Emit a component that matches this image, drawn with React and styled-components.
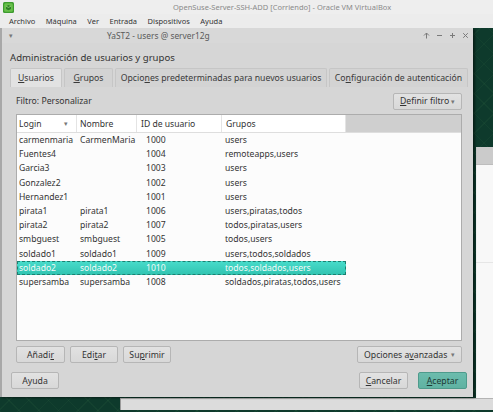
import React from "react";
import styled, { createGlobalStyle, css } from "styled-components";

const Global = createGlobalStyle`
  html, body { margin: 0; padding: 0; }
  body { width: 493px; height: 412px; overflow: hidden; font-family: "Noto Sans", "Open Sans", sans-serif; }
  * { box-sizing: border-box; }
`;

const Frame = styled.div`
  width: 493px;
  height: 412px;
  display: flex;
  flex-direction: column;
  background: #ececec;
  white-space: nowrap;
`;

const TopBar = styled.div`
  height: 14px;
  display: flex;
  align-items: center;
  padding-left: 3px;
  background: #eeeeee;
`;

const TopTitle = styled.span`
  margin-left: 159px;
  font-size: 7.5px;
  color: #8a8a8a;
`;

const MenuBar = styled.div`
  height: 14px;
  display: flex;
  align-items: center;
  padding-left: 4px;
  background: #ececec;
`;

const MenuItem = styled.span`
  font-size: 7.5px;
  color: #333;
  padding: 0 5.5px 0 5px;
`;

const Desktop = styled.div`
  flex: 1;
  position: relative;
  overflow: hidden;
  background-color: #0e3a2c;
  background-image:
    repeating-linear-gradient(45deg, rgba(90, 160, 90, 0.07) 0 1px, transparent 1px 14px),
    repeating-linear-gradient(-45deg, rgba(90, 160, 90, 0.07) 0 1px, transparent 1px 14px);
`;

const BackRight = styled.div`
  position: absolute;
  left: 476px;
  top: 119px;
  width: 40px;
  height: 260px;
  display: flex;
  flex-direction: column;
  background: #f8f8f8;
`;

const BackTitle = styled.div`
  height: 18px;
  background: #cbcbcb;
  border-bottom: 1px solid #bdbdbd;
`;

const BackLine = styled.div`
  margin-top: 97px;
  border-top: 1px solid #e6e6e6;
`;

const BackBottom = styled.div`
  position: absolute;
  left: 120px;
  top: 370px;
  width: 380px;
  height: 12px;
  background: #dcdcdc;
  border-top: 1px solid #b4b4b4;
  border-left: 1px solid #9a9a9a;
`;

const Window = styled.div`
  position: absolute;
  left: 0;
  top: 0;
  width: 473px;
  height: 369px;
  display: flex;
  flex-direction: column;
  background: #d6d6d6;
  border-left: 2px solid #a8a8a8;
  box-shadow: 2px 1px 2px rgba(0, 0, 0, 0.45);
`;

const WinTitle = styled.div`
  height: 15px;
  display: flex;
  align-items: center;
  padding: 0 4px 0 7px;
  background: #d8d8d8;
  color: #5a5a5a;
  font-size: 8.4px;
`;

const WinTitleText = styled.span`
  margin-left: 94px;
  flex: 1;
`;

const WinBtns = styled.div`
  display: flex;
  gap: 6px;
  align-items: center;
`;

const Body = styled.div`
  flex: 1;
  display: flex;
  flex-direction: column;
  padding: 9px 5px 8px 8px;
  color: #333;
`;

const Heading = styled.div`
  font-size: 9.6px;
  line-height: 12px;
  height: 12px;
`;

const TabBar = styled.div`
  margin-top: 4px;
  height: 19px;
  display: flex;
  gap: 2px;
`;

const Tab = styled.div`
  height: 19px;
  display: flex;
  align-items: center;
  justify-content: center;
  width: ${(p) => p.$w}px;
  font-size: 8.7px;
  color: #3a3a3a;
  border: 1px solid #c6c6c6;
  border-bottom: none;
  border-radius: 2px 2px 0 0;
  background: ${(p) => (p.$active ? "#e2e2e2" : "#d3d3d3")};
`;

const Panel = styled.div`
  flex: 1;
  display: flex;
  flex-direction: column;
  padding: 5px 6px 0 6px;
`;

const FilterRow = styled.div`
  height: 18px;
  display: flex;
  align-items: center;
  justify-content: space-between;
  font-size: 8.7px;
`;

const Button = styled.button`
  height: 17px;
  width: ${(p) => p.$w}px;
  padding: 0 ${(p) => (p.$menu ? "6px" : "0")};
  display: flex;
  align-items: center;
  justify-content: ${(p) => (p.$menu ? "space-between" : "center")};
  font-family: "Noto Sans", "Open Sans", sans-serif;
  font-size: 8.7px;
  color: #333;
  white-space: nowrap;
  border: 1px solid #b6b6b6;
  border-radius: 2px;
  background: linear-gradient(#e2e2e2, #d8d8d8);
  ${(p) =>
    p.$primary &&
    css`
      background: linear-gradient(#6cbcad, #5fb2a2);
      border-color: #4e9b8c;
      color: #1d3a35;
    `}
`;

const Arrow = styled.span`
  font-size: 7px;
  color: #777;
`;

const Table = styled.div`
  margin-top: 4px;
  height: 227px;
  display: flex;
  flex-direction: column;
  background: #fcfcfc;
  border: 1px solid #acacac;
  font-size: 8.6px;
`;

const cols = "60px 60px 85px 124px";

const HeadRow = styled.div`
  height: 18px;
  display: grid;
  grid-template-columns: ${cols} 1fr;
  border-bottom: 1px solid #dedede;
`;

const HeadCell = styled.div`
  display: flex;
  align-items: center;
  justify-content: space-between;
  padding: 0 8px 0 ${(p) => p.$pad}px;
  background: #ffffff;
  border-right: 1px solid #e4e4e4;
  color: #333;
`;

const HeadFill = styled.div`
  background: #cfcfcf;
`;

const Row = styled.div`
  height: 14.2px;
  width: 329px;
  display: grid;
  grid-template-columns: ${cols};
  align-items: center;
  color: #333;
  ${(p) =>
    p.$selected &&
    css`
      background: linear-gradient(#48dccb, #30c3b0);
      outline: 1px dashed #1b7f70;
      outline-offset: -1px;
      color: #f4fbfa;
    `}
`;

const Cell = styled.div`
  padding-left: ${(p) => p.$pad}px;
`;

const ButtonRow = styled.div`
  margin-top: 5px;
  display: flex;
  align-items: center;
  gap: 5px;
`;

const Spacer = styled.div`
  flex: 1;
`;

const BottomRow = styled.div`
  margin-top: auto;
  padding: 0 1px;
  display: flex;
  align-items: center;
  gap: 10px;
`;

const U = styled.span`
  text-decoration: underline;
  text-underline-offset: 1px;
`;

const VBoxIcon = () => (
  <svg width="11" height="11" viewBox="0 0 11 11">
    <rect x="0" y="0" width="11" height="11" rx="1.5" fill="#3d9b2f" />
    <rect x="1.2" y="1.2" width="8.6" height="8.6" rx="1.5" fill="#68c04a" />
    <path d="M3 4.2 L5.5 3 L8 4.2 L8 7 L5.5 8.3 L3 7 Z" fill="#2f7f26" />
    <path d="M3 4.2 L5.5 5.4 L8 4.2" stroke="#a8e08c" strokeWidth="0.7" fill="none" />
  </svg>
);

const TitleIcon = ({ d }) => (
  <svg width="7" height="7" viewBox="0 0 7 7">
    <path d={d} stroke="#7a7a7a" strokeWidth="1" fill="none" />
  </svg>
);

const rows = [
  ["carmenmaria", "CarmenMaria", "1000", "users"],
  ["Fuentes4", "", "1004", "remoteapps,users"],
  ["Garcia3", "", "1003", "users"],
  ["Gonzalez2", "", "1002", "users"],
  ["Hernandez1", "", "1001", "users"],
  ["pirata1", "pirata1", "1006", "users,piratas,todos"],
  ["pirata2", "pirata2", "1007", "todos,piratas,users"],
  ["smbguest", "smbguest", "1005", "todos,users"],
  ["soldado1", "soldado1", "1009", "users,todos,soldados"],
  ["soldado2", "soldado2", "1010", "todos,soldados,users"],
  ["supersamba", "supersamba", "1008", "soldados,piratas,todos,users"],
];

export default function App() {
  return (
    <>
      <Global />
      <Frame>
        <TopBar>
          <VBoxIcon />
          <TopTitle>OpenSuse-Server-SSH-ADD [Corriendo] - Oracle VM VirtualBox</TopTitle>
        </TopBar>
        <MenuBar>
          {["Archivo", "Máquina", "Ver", "Entrada", "Dispositivos", "Ayuda"].map((m) => (
            <MenuItem key={m}>{m}</MenuItem>
          ))}
        </MenuBar>
        <Desktop>
          <BackRight>
            <BackTitle />
            <BackLine />
          </BackRight>
          <BackBottom />
          <Window>
            <WinTitle>
              <Arrow>▾</Arrow>
              <WinTitleText>YaST2 - users @ server12g</WinTitleText>
              <WinBtns>
                <TitleIcon d="M3.5 1 L3.5 6.5 M1 3.5 L3.5 1 L6 3.5" />
                <TitleIcon d="M1 3.5 L6 3.5" />
                <TitleIcon d="M3.5 1 L3.5 6 M1 3.5 L6 3.5" />
                <TitleIcon d="M1.2 1.2 L5.8 5.8 M5.8 1.2 L1.2 5.8" />
              </WinBtns>
            </WinTitle>
            <Body>
              <Heading>Administración de usuarios y grupos</Heading>
              <TabBar>
                <Tab $w={52} $active>
                  <span><U>U</U>suarios</span>
                </Tab>
                <Tab $w={49}>
                  <span><U>G</U>rupos</span>
                </Tab>
                <Tab $w={212}>
                  <span>Opcio<U>n</U>es predeterminadas para nuevos usuarios</span>
                </Tab>
                <Tab $w={139}>
                  <span>Co<U>n</U>figuración de autenticación</span>
                </Tab>
              </TabBar>
              <Panel>
                <FilterRow>
                  <span>Filtro: Personalizar</span>
                  <Button $w={69} $menu>
                    <span><U>D</U>efinir filtro</span>
                    <Arrow>▾</Arrow>
                  </Button>
                </FilterRow>
                <Table>
                  <HeadRow>
                    <HeadCell $pad={2}>
                      <span>Login</span>
                      <Arrow>▾</Arrow>
                    </HeadCell>
                    <HeadCell $pad={3}>Nombre</HeadCell>
                    <HeadCell $pad={4}>ID de usuario</HeadCell>
                    <HeadCell $pad={4}>Grupos</HeadCell>
                    <HeadFill />
                  </HeadRow>
                  {rows.map((r) => (
                    <Row key={r[0]} $selected={r[0] === "soldado2"}>
                      <Cell $pad={2}>{r[0]}</Cell>
                      <Cell $pad={3}>{r[1]}</Cell>
                      <Cell $pad={9}>{r[2]}</Cell>
                      <Cell $pad={3}>{r[3]}</Cell>
                    </Row>
                  ))}
                </Table>
                <ButtonRow>
                  <Button $w={49}>
                    <span>Añadi<U>r</U></span>
                  </Button>
                  <Button $w={48}>
                    <span>Edi<U>t</U>ar</span>
                  </Button>
                  <Button $w={48}>
                    <span>Su<U>p</U>rimir</span>
                  </Button>
                  <Spacer />
                  <Button $w={105} $menu>
                    <span>Opciones a<U>v</U>anzadas</span>
                    <Arrow>▾</Arrow>
                  </Button>
                </ButtonRow>
              </Panel>
              <BottomRow>
                <Button $w={48}>Ayuda</Button>
                <Spacer />
                <Button $w={49}>
                  <span><U>C</U>ancelar</span>
                </Button>
                <Button $w={49} $primary>
                  <span><U>A</U>ceptar</span>
                </Button>
              </BottomRow>
            </Body>
          </Window>
        </Desktop>
      </Frame>
    </>
  );
}
